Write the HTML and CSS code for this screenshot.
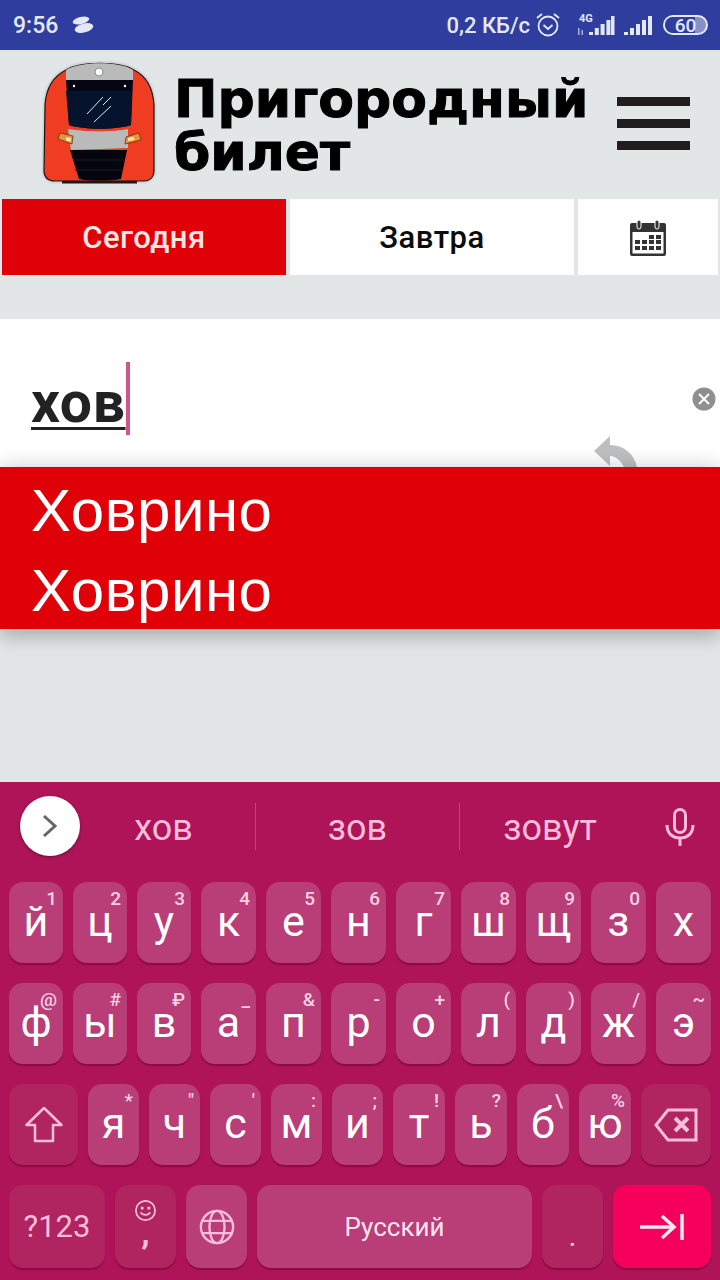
FILE: index.html
```html
<!DOCTYPE html>
<html lang="ru">
<head>
    <meta charset="UTF-8">
    <meta name="viewport" content="width=device-width, initial-scale=1.0">
    <title>Пригородный билет</title>
    <link rel="stylesheet" href="styles.css">
</head>
<body>
    <div class="statusbar">
        <span class="time">9:56</span>
        <svg class="sb-cloud" width="24" height="18" viewBox="0 0 24 18" fill="#e4e8f6"><ellipse cx="11" cy="4.500" rx="8.500" ry="3.500" transform="rotate(-14 11 4.500)"/><ellipse cx="14" cy="12" rx="9.500" ry="4.500" transform="rotate(-14 14 12)"/></svg>
        <span class="spacer"></span>
        <span class="speed">0,2 КБ/с</span>
        <svg class="sb-alarm" width="26" height="26" viewBox="0 0 26 26" fill="none" stroke="#e4e8f6"><circle cx="13" cy="14" r="9.500" stroke-width="1.800"/><path d="M8.500 13l4.500 4 4.500-4" stroke-width="1.800"/><path d="M2 6l5-4M24 6l-5-4" stroke-width="2"/></svg>
        <svg class="sb-signal4g" width="38" height="24" viewBox="0 0 38 24"><text x="2" y="9" class="sb-4g">4G</text><path d="M1 15h1.500v7H1zM4.500 17H6v5H4.500z" fill="#a9b1da"/><path d="M12 19h4v3h-4zM17.800 15h4v7h-4zM23.600 11h4v11h-4zM29.400 7h4v15h-4zM34 3h3.500v19H34z" fill="#e4e8f6"/></svg>
        <svg class="sb-signal" width="29" height="22" viewBox="0 0 29 22"><path d="M0 18h4v3H0zM6 14h4v7H6zM12 10h4v11h-4zM18 6h4v15h-4zM24 2h4v19h-4z" fill="#e4e8f6"/></svg>
        <span class="battery"><span class="battery-level"></span><span class="battery-text">60</span></span>
    </div>

    <header class="header">
        <svg class="logo" width="140" height="135" viewBox="0 0 140 135">
            <path d="M36 15C50 6 90 6 104 15 116 21 123 33 124 50L124 115C124 122 120 126 114 126H25C18 126 14 122 14 115L15 50C16 33 24 21 36 15z" fill="none" stroke="#d3d5d6" stroke-width="5"/>
            <path d="M32 126h75v2.500H32z" fill="#1c1a1c"/>
            <path d="M36 15C50 6 90 6 104 15 116 21 123 33 124 50L124 115C124 122 120 126 114 126H25C18 126 14 122 14 115L15 50C16 33 24 21 36 15z" fill="#f03c20" stroke="#1a1416" stroke-width="1.200"/>
            <path d="M36 15C50 6 90 6 103 15V25H36z" fill="#b9bbbb"/>
            <circle cx="69" cy="17" r="4" fill="#fff" stroke="#8d8f90"/>
            <path d="M36 25H103L101 70C85 75 55 75 39 70z" fill="#050515"/>
            <path d="M36 36H102L101 70C85 75 55 75 39 70z" fill="#06132c"/>
            <circle cx="44" cy="31" r="1.200" fill="#fff"/>
            <circle cx="95" cy="31" r="1.200" fill="#fff"/>
            <path d="M57 59L73 42M64 67L81 51M73 50L81 42" stroke="#e6e9f2" stroke-width="1"/>
            <path d="M38 74C55 77 85 77 98 74V93L41 95z" fill="#b9bbbb"/>
            <path d="M40 95H97L91 124C80 126 58 126 49 124z" fill="#05050f"/>
            <path d="M43 105H95M45 115H93" stroke="#1c1c2a"/>
            <path d="M30 78L43 81 42 89 28 84z" fill="#f0902e" stroke="#4b2a1a" stroke-width=".7"/>
            <path d="M96 82L109 78 111 85 95 89z" fill="#f0902e" stroke="#4b2a1a" stroke-width=".7"/>
            <path d="M36 82l5 1-.5 4-4.500-1.500zM98 83l6-1.500.5 3.500-6.500 1z" fill="#f8e2b8"/>
        </svg>
        <h1 class="title">Пригородный<br>билет</h1>
        <div class="burger"><span></span><span></span><span></span></div>
    </header>

    <nav class="tabs">
        <div class="tab tab-active">Сегодня</div>
        <div class="tab">Завтра</div>
        <div class="tab tab-cal">
            <svg width="36" height="36" viewBox="0 0 36 36">
                <rect x="0" y="3" width="36" height="33" rx="2" fill="#333"/>
                <rect x="2.500" y="12" width="31" height="21.500" fill="#fff"/>
                <rect x="7" y="0" width="4" height="9" rx="2" fill="#333" stroke="#fff"/>
                <rect x="25" y="0" width="4" height="9" rx="2" fill="#333" stroke="#fff"/>
                <path d="M19 15h5v4h-5zM26 15h5v4h-5zM5 20h5v4H5zM12 20h5v4h-5zM19 20h5v4h-5zM26 20h5v4h-5zM5 26h5v4H5zM12 26h5v4h-5zM19 26h5v4h-5zM26 26h5v4h-5z" fill="#333"/>
            </svg>
        </div>
    </nav>

    <section class="search">
        <div class="search-input">
            <span class="search-word">хов</span><span class="caret"></span>
        </div>
        <span class="clear">
            <svg width="24" height="24" viewBox="0 0 24 24"><circle cx="12" cy="12" r="11.500" fill="#8f8f8f"/><path d="M7 7l10 10M17 7L7 17" stroke="#fff" stroke-width="2"/></svg>
        </span>
        <svg class="undo" width="44" height="31" viewBox="0 0 44 31"><path d="M16 0L0 15l16 15V20c6 0 10 4 14 11h13C40 18 30 9 16 9z" fill="#bdbfc1"/></svg>
        <ul class="suggest">
            <li>Ховрино</li>
            <li>Ховрино</li>
        </ul>
    </section>

    <div class="fill"></div>

    <div class="keyboard">
        <div class="strip">
            <span class="strip-btn">
                <svg width="16" height="24" viewBox="0 0 16 24" fill="none"><path d="M2 2l11 10L2 22" stroke="#666" stroke-width="3"/></svg>
            </span>
            <span class="word word-1">хов</span>
            <span class="word word-2">зов</span>
            <span class="word word-3">зовут</span>
            <span class="mic">
                <svg width="30" height="38" viewBox="0 0 30 38" fill="none" stroke="#f8bddb" stroke-width="3"><rect x="9.500" y="1.500" width="11" height="23" rx="5.500"/><path d="M2 17c0 9 6 13 13 13s13-4 13-13M15 30v8"/></svg>
            </span>
        </div>

        <div class="row row-full">
            <div class="key">й<span class="hint">1</span></div>
            <div class="key">ц<span class="hint">2</span></div>
            <div class="key">у<span class="hint">3</span></div>
            <div class="key">к<span class="hint">4</span></div>
            <div class="key">е<span class="hint">5</span></div>
            <div class="key">н<span class="hint">6</span></div>
            <div class="key">г<span class="hint">7</span></div>
            <div class="key">ш<span class="hint">8</span></div>
            <div class="key">щ<span class="hint">9</span></div>
            <div class="key">з<span class="hint">0</span></div>
            <div class="key">х</div>
        </div>
        <div class="row row-full">
            <div class="key">ф<span class="hint">@</span></div>
            <div class="key">ы<span class="hint">#</span></div>
            <div class="key">в<span class="hint">₽</span></div>
            <div class="key">а<span class="hint">_</span></div>
            <div class="key">п<span class="hint">&amp;</span></div>
            <div class="key">р<span class="hint">-</span></div>
            <div class="key">о<span class="hint">+</span></div>
            <div class="key">л<span class="hint">(</span></div>
            <div class="key">д<span class="hint">)</span></div>
            <div class="key">ж<span class="hint">/</span></div>
            <div class="key">э<span class="hint">~</span></div>
        </div>
        <div class="row row-shift">
            <div class="key key-dark key-shift">
                <svg width="38" height="37" viewBox="0 0 38 37" fill="none" stroke="#f8bddb" stroke-width="2.500" stroke-linejoin="round"><path d="M19 2L1.500 19H10v16h18V19h8.500z"/></svg>
            </div>
            <div class="key">я<span class="hint">*</span></div>
            <div class="key">ч<span class="hint">"</span></div>
            <div class="key">с<span class="hint">'</span></div>
            <div class="key">м<span class="hint">:</span></div>
            <div class="key">и<span class="hint">;</span></div>
            <div class="key">т<span class="hint">!</span></div>
            <div class="key">ь<span class="hint">?</span></div>
            <div class="key">б<span class="hint">\</span></div>
            <div class="key">ю<span class="hint">%</span></div>
            <div class="key key-dark key-back">
                <svg width="44" height="34" viewBox="0 0 44 34" fill="none" stroke="#f8bddb" stroke-width="3"><path d="M14 2h28v30H14L2 17z"/><path d="M21 10l13 13M34 10L21 23" stroke-width="4"/></svg>
            </div>
        </div>
        <div class="row row-bottom">
            <div class="key key-dark key-num">?123</div>
            <div class="key key-dark key-comma">
                <svg width="23" height="23" viewBox="0 0 24 24" fill="none" stroke="#f8bddb" stroke-width="1.800"><circle cx="12" cy="12" r="10"/><circle cx="8.500" cy="9.500" r=".8"/><circle cx="15.500" cy="9.500" r=".8"/><path d="M7 14c2 3.500 8 3.500 10 0"/></svg>
                <span class="comma">,</span>
            </div>
            <div class="key key-globe">
                <svg width="36" height="36" viewBox="0 0 38 38" fill="none" stroke="#f8bddb" stroke-width="2.500"><circle cx="19" cy="19" r="17"/><ellipse cx="19" cy="19" rx="8" ry="17"/><path d="M4 12.500h30M4 25.500h30"/></svg>
            </div>
            <div class="key key-space">Русский</div>
            <div class="key key-dark key-dot">.</div>
            <div class="key key-enter">
                <svg width="44" height="26" viewBox="0 0 44 26" fill="none" stroke="#fde7ef" stroke-width="3.500"><path d="M0 13h34M22 2l12 11-12 11M42 0v26"/></svg>
            </div>
        </div>
    </div>
</body>
</html>
```

FILE: styles.css
```css
html, body {
    margin: 0;
    padding: 0;
}
body {
    width: 720px;
    height: 1280px;
    display: flex;
    flex-direction: column;
    overflow: hidden;
    background-color: #e3e6e7;
    font-family: Roboto, sans-serif;
}

/* status bar */
.statusbar {
    height: 50px;
    display: flex;
    align-items: center;
    padding: 0 12px 0 13px;
    background-color: #2f3e9e;
    color: #e4e8f6;
    font-weight: 500;
    font-size: 23px;
}
.sb-cloud {
    margin-left: 12px;
}
.spacer {
    flex: 1;
}
.speed {
    font-size: 22px;
}
.sb-alarm {
    margin-left: 5px;
}
.sb-signal4g {
    margin-left: 16px;
}
.sb-4g {
    font-size: 11px;
    font-weight: 700;
    fill: #e4e8f6;
}
.sb-signal {
    margin-left: 9px;
}
.battery {
    position: relative;
    width: 45px;
    height: 20px;
    margin-left: 10px;
    border: 2px solid #e4e8f6;
    border-radius: 11px;
    box-sizing: border-box;
    display: flex;
    align-items: center;
    justify-content: center;
    overflow: hidden;
    background-color: #8790c8;
    font-size: 19px;
}
.battery-level {
    position: absolute;
    top: 0;
    bottom: 0;
    left: 0;
    width: 72%;
    background-color: #2f3e9e;
}
.battery-text {
    position: relative;
}

/* header */
.header {
    height: 148px;
    display: flex;
    align-items: flex-start;
    padding-left: 30px;
    box-sizing: border-box;
}
.logo {
    margin-top: 5px;
    flex: none;
}
.title {
    margin: 23px 0 0 4px;
    flex: 1;
    font-family: "DejaVu Sans", sans-serif;
    font-weight: 700;
    font-size: 52px;
    line-height: 53px;
    color: #000;
    -webkit-text-stroke: 1px #000;
    white-space: nowrap;
}
.burger {
    width: 73px;
    margin: 47px 30px 0 0;
    display: flex;
    flex-direction: column;
    gap: 13px;
}
.burger span {
    height: 9px;
    background-color: #211c1e;
}

/* tabs */
.tabs {
    display: flex;
    gap: 4px;
    margin: 1px 2px 44px;
}
.tab {
    width: 284px;
    height: 76px;
    padding-top: 1px;
    display: flex;
    align-items: center;
    justify-content: center;
    box-sizing: border-box;
    background-color: #fff;
    font-weight: 500;
    font-size: 31px;
    letter-spacing: .5px;
    color: #0c0c0c;
}
.tab-active {
    background-color: #e00007;
    color: #fbe6e2;
}
.tab-cal {
    width: 140px;
}

/* search */
.search {
    position: relative;
    height: 148px;
    padding-top: 43px;
    box-sizing: border-box;
    background-color: #fff;
}
.search-input {
    display: flex;
    align-items: flex-start;
    padding-left: 31px;
}
.search-word {
    margin-top: 13px;
    font-weight: 700;
    font-size: 57px;
    line-height: 56px;
    letter-spacing: .7px;
    color: #222;
    text-decoration: underline;
    text-decoration-thickness: 3px;
    text-underline-offset: 5px;
}
.caret {
    width: 4px;
    height: 73px;
    background-color: #d0558f;
}
.clear {
    position: absolute;
    right: 4px;
    top: 68px;
    line-height: 0;
}
.undo {
    position: absolute;
    left: 594px;
    top: 117px;
}
.suggest {
    position: absolute;
    left: 0;
    right: 0;
    top: 148px;
    height: 162px;
    margin: 0;
    padding: 4px 0 0;
    box-sizing: border-box;
    list-style: none;
    background-color: #e00007;
    box-shadow: 0 0 20px rgba(0, 0, 0, .2), 0 12px 16px rgba(0, 0, 0, .12);
    color: #fff;
    font-family: "Liberation Sans", sans-serif;
    font-size: 60px;
    letter-spacing: .5px;
    line-height: 80px;
}
.suggest li {
    padding-left: 31px;
}

.fill {
    flex: 1;
}

/* keyboard */
.keyboard {
    height: 498px;
    display: flex;
    flex-direction: column;
    gap: 20px;
    padding: 0 9px;
    box-sizing: border-box;
    background-color: #ae1457;
}
.strip {
    height: 80px;
    margin: 0 -9px;
    display: flex;
    align-items: flex-start;
    color: #f8bddb;
    font-size: 36px;
}
.strip-btn {
    width: 60px;
    height: 60px;
    margin: 14px 0 0 20px;
    border-radius: 50%;
    background-color: #fff;
    box-shadow: 0 1px 3px rgba(0, 0, 0, .4);
    display: flex;
    align-items: center;
    justify-content: center;
    flex: none;
}
.word {
    height: 47px;
    margin-top: 21px;
    padding-top: 3px;
    display: flex;
    align-items: center;
    justify-content: center;
    box-sizing: border-box;
}
.word-1 {
    width: 176px;
    padding-right: 8px;
    border-right: 1px solid #c2447f;
}
.word-2 {
    width: 204px;
    border-right: 1px solid #c2447f;
}
.word-3 {
    width: 180px;
}
.mic {
    width: 80px;
    margin-top: 26px;
    text-align: center;
    line-height: 0;
}
.row {
    display: flex;
    gap: 10px;
    height: 81px;
}
.row-bottom {
    height: 83px;
}
.key {
    position: relative;
    flex: 1 1 0;
    min-width: 0;
    display: flex;
    align-items: center;
    justify-content: center;
    padding-bottom: 3px;
    box-sizing: border-box;
    border-radius: 14px;
    background-color: #b93d76;
    box-shadow: 0 2px 1px rgba(110, 0, 50, .5);
    color: #fff;
    font-size: 43px;
    line-height: 1;
}
.row-full .key:nth-child(-n+3) {
    flex: 0 0 54px;
}
.row-shift .key:nth-child(n+2):nth-child(-n+6) {
    flex: 0 0 51px;
}
.hint {
    position: absolute;
    top: 5px;
    right: 6px;
    font-size: 19px;
    line-height: 24px;
    font-weight: 500;
    color: #f9cfe3;
}
.key-dark {
    padding-bottom: 0;
    background-color: #b02460;
    color: #f8bddb;
}
.row-shift .key-shift {
    flex: 0 0 69px;
}
.row-shift .key-back {
    flex: 0 0 70px;
}
.key-num {
    flex: 0 0 96px;
    font-size: 31px;
}
.key-comma {
    flex: 0 0 61px;
    flex-direction: column;
    justify-content: flex-start;
    padding-top: 14px;
}
.comma {
    font-size: 34px;
    line-height: 20px;
    font-weight: 700;
}
.key-globe {
    flex: 0 0 61px;
    padding-bottom: 0;
}
.key-space {
    flex: 0 0 275px;
    padding-bottom: 0;
    font-size: 26px;
    color: #fbe3ee;
}
.key-dot {
    flex: 0 0 61px;
    font-size: 30px;
    padding-top: 18px;
}
.key-enter {
    flex: 0 0 98px;
    padding-bottom: 0;
    background-color: #f5005a;
}
```
